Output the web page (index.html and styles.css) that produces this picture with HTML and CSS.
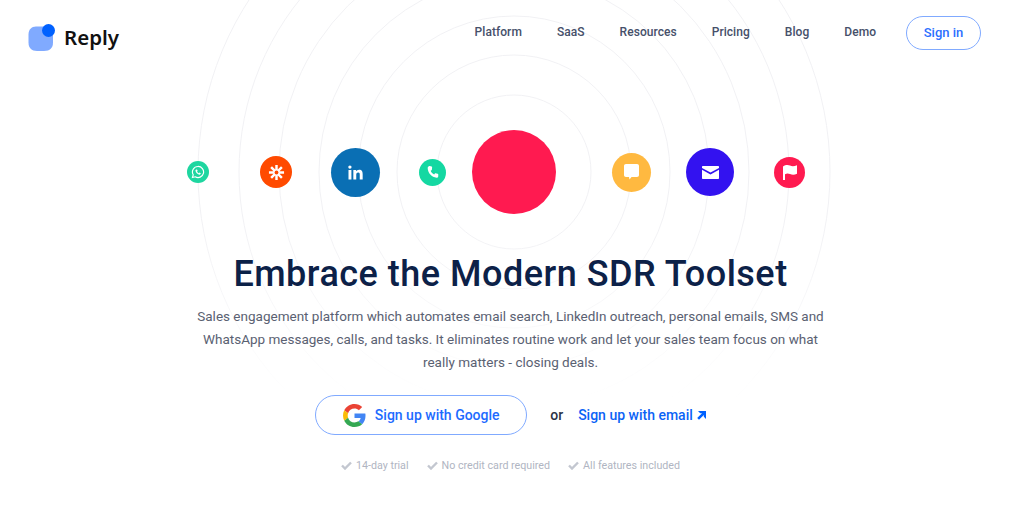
FILE: index.html
```html
<!DOCTYPE html>
<html>

<head>
  <meta charset="UTF-8">
  <title>Reply</title>
  <link rel="stylesheet" href="styles.css">
</head>

<body>
<svg class="rings" width="1024" height="524" viewBox="0 0 1024 524">
  <defs>
    <linearGradient id="ringfade" gradientUnits="userSpaceOnUse" x1="0" y1="220" x2="0" y2="400">
      <stop offset="0" stop-color="#f1f1f4"></stop>
      <stop offset="1" stop-color="#ffffff"></stop>
    </linearGradient>
  </defs>
  <circle cx="514" cy="172" r="77"></circle>
  <circle cx="514" cy="172" r="117"></circle>
  <circle cx="514" cy="172" r="156"></circle>
  <circle cx="514" cy="172" r="195"></circle>
  <circle cx="514" cy="172" r="235"></circle>
  <circle cx="514" cy="172" r="275"></circle>
  <circle cx="514" cy="172" r="316"></circle>
</svg>

<header class="header">
  <a class="logo">
    <span class="logo-mark">
      <svg width="28" height="27" viewBox="0 0 28 27">
        <path d="M8 2.500h8c6 0 9 3 9 9v7c0 5.500-3 8.500-9 8.500H9c-5.500 0-8.500-3-8.500-8.500v-8c0-5 3-8 7.500-8z" fill="#80aaff"></path>
        <circle cx="20.500" cy="6.500" r="6.500" fill="#0061ff"></circle>
      </svg>
    </span>
    <span class="logo-text">Reply</span>
  </a>
  <nav class="nav">
    <a>Platform</a>
    <a>SaaS</a>
    <a>Resources</a>
    <a>Pricing</a>
    <a>Blog</a>
    <a>Demo</a>
  </nav>
  <a class="signin">Sign in</a>
</header>

<div class="icons">
  <span class="icon whatsapp">
    <svg width="14" height="14" viewBox="0 0 24 24"><path d="M12 2.500a9.500 9.500 0 0 0-8.200 14.300L2.500 21.500l4.800-1.300A9.500 9.500 0 1 0 12 2.500z" fill="none" stroke="#fff" stroke-width="2"></path><path d="M9 7.500c-.8.300-1.500 1.200-1.300 2.500.4 2.800 3.400 6 6.300 6.500 1.300.2 2.300-.5 2.600-1.400l.1-1-2.200-1.100-1 1.100c-1.300-.5-2.600-1.800-3.100-3.100l1-1L10.300 7.700z" fill="#fff"></path></svg>
  </span>
  <span class="icon zapier">
    <svg width="17" height="17" viewBox="0 0 18 18"><g stroke="#fff" stroke-width="2.600"><path d="M9 1v16M1 9h16M3.300 3.300l11.400 11.400M14.700 3.300L3.300 14.700"></path></g><circle cx="9" cy="9" r="2" fill="#ff4a00"></circle></svg>
  </span>
  <span class="icon linkedin">
    <svg width="15" height="15" viewBox="0 0 18 18"><path d="M.6 6h3.500v11.500H.6zM2.300.5a2 2 0 1 1 0 4 2 2 0 0 1 0-4zM6.400 6h3.300v1.600c.6-1 1.800-1.900 3.600-1.900 3.600 0 4.300 2.300 4.300 5.400v6.400h-3.500v-5.600c0-1.400 0-3-1.900-3s-2.300 1.400-2.300 2.900v5.700H6.400z" fill="#fff"></path></svg>
  </span>
  <span class="icon phone">
    <svg width="14" height="14" viewBox="0 0 24 24"><path d="M6.600 1.800l3 .8c.6.200.9.700.9 1.300l-.3 4c0 .5-.3.800-.7 1l-1.500.8c1 2.700 3.300 5.200 6 6.500l1-1.400c.3-.4.700-.6 1.200-.5l3.800.6c.6.100 1 .6 1 1.200v3.200c0 1.600-1.200 2.800-2.900 2.600C9.900 21 3 13.900 2.900 5.300c0-2 1.700-3.900 3.700-3.500z" fill="#fff"></path></svg>
  </span>
  <span class="icon main"></span>
  <span class="icon chat">
    <svg width="15" height="16" viewBox="0 0 15 16"><path d="M2 0h11c1.200 0 2 .8 2 2v9c0 1.200-.8 2-2 2H7.500L5.500 15.500 5 13H2c-1.200 0-2-.8-2-2V2C0 .8.800 0 2 0z" fill="#fff"></path></svg>
  </span>
  <span class="icon mail">
    <svg width="17" height="13" viewBox="0 0 17 13"><path d="M1 0h15c.6 0 1 .4 1 1v.9L8.500 6.500 0 1.900V1c0-.6.400-1 1-1zM0 3.800l8.500 4.600L17 3.800V12c0 .6-.4 1-1 1H1c-.6 0-1-.4-1-1z" fill="#fff"></path></svg>
  </span>
  <span class="icon flag">
    <svg width="14" height="15" viewBox="0 0 14 15"><path d="M0 1.500C2.500-.2 5-.2 7 .6s4 .9 7-.4v8.500c-2.500 1.400-4.800 1.300-7 .4-1.800-.7-3.200-.7-5 .1V15H0z" fill="#fff"></path></svg>
  </span>
</div>

<div class="hero">
  <h1>Embrace the Modern SDR Toolset</h1>
  <p>Sales engagement platform which automates email search, LinkedIn outreach, personal emails, SMS and<br>WhatsApp messages, calls, and tasks. It eliminates routine work and let your sales team focus on what<br>really matters - closing deals.</p>

  <div class="actions">
    <a class="google-btn">
      <svg width="23" height="23" viewBox="0 0 48 48">
        <path fill="#ea4335" d="M24 9.500c3.500 0 6.700 1.200 9.200 3.600l6.900-6.900C35.900 2.400 30.500 0 24 0 14.600 0 6.500 5.400 2.600 13.200l8 6.200C12.400 13.700 17.700 9.500 24 9.500z"></path>
        <path fill="#4285f4" d="M47 24.500c0-1.600-.1-3.100-.4-4.500H24v9h12.900c-.6 3-2.200 5.500-4.700 7.200l7.700 6c4.500-4.200 7.100-10.400 7.100-17.700z"></path>
        <path fill="#fbbc05" d="M10.600 28.600c-.5-1.400-.8-3-.8-4.600s.3-3.200.8-4.600l-8-6.200C.9 16.500 0 20.100 0 24s.9 7.500 2.600 10.800z"></path>
        <path fill="#34a853" d="M24 48c6.500 0 11.900-2.100 15.900-5.800l-7.700-6c-2.200 1.400-4.900 2.300-8.200 2.300-6.300 0-11.600-4.200-13.400-9.900l-8 6.200C6.500 42.600 14.600 48 24 48z"></path>
      </svg>
      Sign up with Google
    </a>
    <span class="or">or</span>
    <a class="email-link">Sign up with email
      <svg width="9" height="9" viewBox="0 0 9 9"><path d="M1 0h8v8L6.800 5.800V4L2 8.800.2 7 5 2.200H3.200z" fill="#0061ff"></path></svg>
    </a>
  </div>

  <ul class="perks">
    <li><svg width="11" height="9" viewBox="0 0 11 9"><path d="M1 4.500l3 3 6-6" fill="none" stroke="#c3c7d0" stroke-width="2.400"></path></svg>14-day trial</li>
    <li><svg width="11" height="9" viewBox="0 0 11 9"><path d="M1 4.500l3 3 6-6" fill="none" stroke="#c3c7d0" stroke-width="2.400"></path></svg>No credit card required</li>
    <li><svg width="11" height="9" viewBox="0 0 11 9"><path d="M1 4.500l3 3 6-6" fill="none" stroke="#c3c7d0" stroke-width="2.400"></path></svg>All features included</li>
  </ul>
</div>
</body>

</html>
```

FILE: styles.css
```css
* {
  box-sizing: border-box;
}
html, body {
  margin: 0;
  height: 524px;
  overflow: hidden;
  background: #fff;
  font-family: "Roboto", "Liberation Sans", sans-serif;
}
a {
  text-decoration: none;
}

.rings {
  position: absolute;
  left: 0;
  top: 0;
}
.rings circle {
  fill: none;
  stroke: url(#ringfade);
  stroke-width: 1;
}

.header {
  position: relative;
  display: flex;
  align-items: center;
  height: 50px;
  margin-top: 8px;
  padding: 0 43px 0 28px;
}
.logo {
  display: flex;
  align-items: center;
  margin-top: 8px;
  color: #111;
}
.logo-mark {
  display: flex;
  width: 36px;
}
.logo-text {
  font-family: "Noto Sans", sans-serif;
  font-size: 20.500px;
  font-weight: 600;
}
.nav {
  display: flex;
  gap: 35px;
  margin-left: auto;
  margin-right: 30px;
  margin-top: -2px;
  font-size: 12px;
  font-weight: 500;
  letter-spacing: .05px;
  color: #46506a;
}
.signin {
  width: 75px;
  height: 34px;
  line-height: 32px;
  text-align: center;
  border: 1px solid #80aaff;
  border-radius: 17px;
  font-size: 13px;
  font-weight: 500;
  color: #2b6fff;
}

.icons {
  position: relative;
  display: flex;
  align-items: center;
  height: 84px;
  margin-top: 72px;
  padding-left: 187px;
}
.icon {
  display: flex;
  align-items: center;
  justify-content: center;
  flex: none;
  border-radius: 50%;
}
.whatsapp { width: 22px; height: 22px; background: #1ed6a0; }
.zapier { width: 32px; height: 32px; margin-left: 51px; background: #ff4a00; }
.linkedin { width: 49px; height: 49px; margin-left: 39px; background: #0a6fb4; }
.phone { width: 27px; height: 27px; margin-left: 39px; background: #14d8a2; }
.main { width: 84px; height: 84px; margin-left: 26px; background: #ff1a50; }
.chat { width: 39px; height: 39px; margin-left: 56px; background: #ffb940; }
.mail { width: 48px; height: 48px; margin-left: 35px; background: #3312f0; }
.flag { width: 31px; height: 31px; margin-left: 40px; background: #ff1a50; }

.hero {
  position: relative;
  display: flex;
  flex-direction: column;
  align-items: center;
  margin-left: -3px;
  text-align: center;
}
h1 {
  margin: 38px 0 0;
  font-size: 36px;
  line-height: 44px;
  font-weight: 500;
  letter-spacing: .5px;
  color: #0c2148;
}
.hero p {
  margin: 9px 0 0;
  font-size: 13.500px;
  line-height: 23px;
  color: #5a6172;
}
.actions {
  display: flex;
  align-items: center;
  margin-top: 21px;
  font-size: 14px;
  font-weight: 500;
}
.google-btn {
  display: flex;
  align-items: center;
  justify-content: center;
  gap: 9px;
  width: 212px;
  height: 40px;
  border: 1px solid #80aaff;
  border-radius: 20px;
  color: #1d6bff;
}
.or {
  margin-left: 23px;
  color: #2a3245;
}
.email-link {
  display: flex;
  align-items: center;
  gap: 4px;
  margin-left: 15px;
  color: #0b63f6;
}
.perks {
  display: flex;
  gap: 18px;
  margin: 24px 0 0;
  padding: 0;
  list-style: none;
  font-size: 10.700px;
  color: #b0b5c2;
}
.perks li {
  display: flex;
  align-items: center;
  gap: 4px;
}
```
